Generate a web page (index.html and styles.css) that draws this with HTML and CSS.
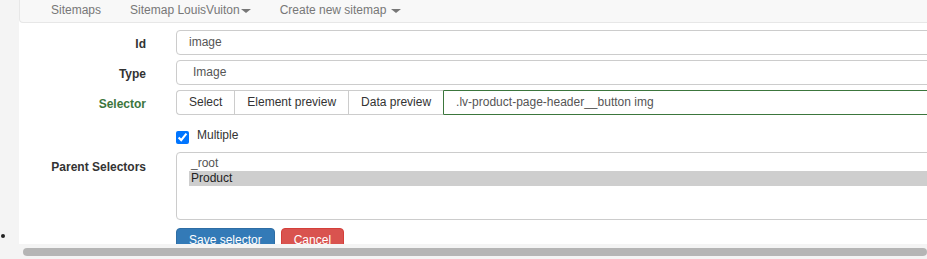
FILE: index.html
```html
<!DOCTYPE html>
<html lang="en">
<head>
  <meta charset="UTF-8">
  <meta name="viewport" content="width=device-width, initial-scale=1.0">
  <title>Web Scraper - Edit selector</title>
  <link rel="stylesheet" href="styles.css">
</head>
<body>
  <div class="page">
    <div class="gutter">
      <span class="dot"></span>
    </div>

    <div class="panel">
      <nav class="navbar">
        <a href="#">Sitemaps</a>
        <a href="#">Sitemap LouisVuiton<span class="caret"></span></a>
        <a href="#">Create new sitemap <span class="caret"></span></a>
      </nav>

      <form class="form">
        <div class="row">
          <label class="label">Id</label>
          <div class="control">
            <div class="input">image</div>
          </div>
        </div>

        <div class="row">
          <label class="label">Type</label>
          <div class="control">
            <div class="input select-type">Image</div>
          </div>
        </div>

        <div class="row">
          <label class="label success">Selector</label>
          <div class="control group">
            <button type="button" class="group-btn first">Select</button>
            <button type="button" class="group-btn">Element preview</button>
            <button type="button" class="group-btn">Data preview</button>
            <div class="input success-input">.lv-product-page-header__button img</div>
          </div>
        </div>

        <div class="row check-row">
          <span class="label"></span>
          <div class="control check">
            <input type="checkbox" id="multiple" checked>
            <label for="multiple">Multiple</label>
          </div>
        </div>

        <div class="row list-row">
          <label class="label">Parent Selectors</label>
          <div class="control">
            <div class="listbox">
              <div class="option">_root</div>
              <div class="option selected">Product</div>
            </div>
          </div>
        </div>

        <div class="row actions">
          <span class="label"></span>
          <div class="control buttons">
            <button type="button" class="btn btn-primary">Save selector</button>
            <button type="button" class="btn btn-danger">Cancel</button>
          </div>
        </div>
      </form>

      <div class="hscroll">
        <div class="thumb"></div>
      </div>
    </div>
  </div>
</body>
</html>
```

FILE: styles.css
```css
* {
  box-sizing: border-box;
  margin: 0;
  padding: 0;
}

body {
  font-family: 'Liberation Sans', Arial, sans-serif;
  font-size: 12px;
  color: #333;
  background-color: #f4f4f4;
  overflow: hidden;
}

.page {
  display: flex;
  height: 100vh;
}

.gutter {
  width: 19px;
  flex-shrink: 0;
  display: flex;
  flex-direction: column;
}

.dot {
  width: 4px;
  height: 4px;
  margin: auto 0 21px 1px;
  border-radius: 50%;
  background-color: #222;
}

.panel {
  flex: 1;
  min-width: 0;
  display: flex;
  flex-direction: column;
  overflow: hidden;
  background-color: #fff;
}

.navbar {
  height: 23px;
  flex-shrink: 0;
  display: flex;
  align-items: center;
  gap: 29px;
  padding-left: 31px;
  padding-bottom: 2px;
  background-color: #f8f8f8;
  border-left: 1px solid #e7e7e7;
  border-bottom: 1px solid #e7e7e7;
  border-bottom-left-radius: 4px;
}

.navbar a {
  color: #777;
  text-decoration: none;
  white-space: nowrap;
}

.caret {
  display: inline-block;
  width: 0;
  height: 0;
  margin-left: 1px;
  vertical-align: middle;
  border-top: 4px solid #777;
  border-left: 5px solid transparent;
  border-right: 5px solid transparent;
}

.form {
  flex: 1;
  min-height: 0;
  overflow: hidden;
  padding-top: 7px;
}

.row {
  display: flex;
  align-items: flex-start;
  gap: 30px;
  margin-bottom: 5px;
}

.label {
  width: 127px;
  flex-shrink: 0;
  text-align: right;
  font-weight: bold;
  line-height: 22px;
  padding-top: 3px;
}

.label.success {
  color: #3c763d;
}

.control {
  width: 780px;
  flex-shrink: 0;
}

.input {
  height: 25px;
  padding: 0 12px 1px;
  line-height: 22px;
  color: #555;
  border: 1px solid #ccc;
  border-radius: 4px;
  white-space: nowrap;
}

.select-type {
  padding-left: 16px;
}

.group {
  display: flex;
}

.group-btn {
  height: 25px;
  padding: 0 12px 2px;
  font: inherit;
  color: #333;
  background-color: #fff;
  border: 1px solid #ccc;
  border-right: none;
  white-space: nowrap;
}

.group-btn.first {
  border-radius: 4px 0 0 4px;
}

.success-input {
  flex: 1;
  border-color: #3c763d;
  border-radius: 0 4px 4px 0;
}

.check-row {
  margin-top: 13px;
  margin-bottom: 8px;
}

.check-row .label {
  line-height: 16px;
  padding: 0;
}

.check {
  display: flex;
  align-items: flex-start;
  gap: 8px;
  height: 16px;
}

.check input {
  width: 13px;
  height: 13px;
  margin-top: 3px;
}

.check label {
  line-height: 14px;
}

.list-row .label {
  line-height: 14px;
  padding-top: 8px;
}

.listbox {
  height: 68px;
  padding: 3px 12px;
  border: 1px solid #ccc;
  border-radius: 4px;
}

.option {
  height: 15px;
  line-height: 15px;
  padding-left: 2px;
  color: #555;
}

.option.selected {
  color: #222;
  background-color: #cecece;
  margin-right: -12px;
}

.actions {
  margin-top: 8px;
}

.buttons {
  display: flex;
  gap: 6px;
}

.btn {
  height: 25px;
  padding: 0 12px 2px;
  font: inherit;
  color: #fff;
  border: 1px solid transparent;
  border-radius: 4px;
  white-space: nowrap;
}

.btn-primary {
  background-color: #337ab7;
  border-color: #2e6da4;
}

.btn-danger {
  background-color: #d9534f;
  border-color: #d43f3a;
}

.hscroll {
  height: 15px;
  flex-shrink: 0;
  padding: 4px 0 0 4px;
  background-color: #f4f4f4;
}

.thumb {
  height: 8px;
  border-radius: 4px;
  background-color: #b5b5b5;
}
```
